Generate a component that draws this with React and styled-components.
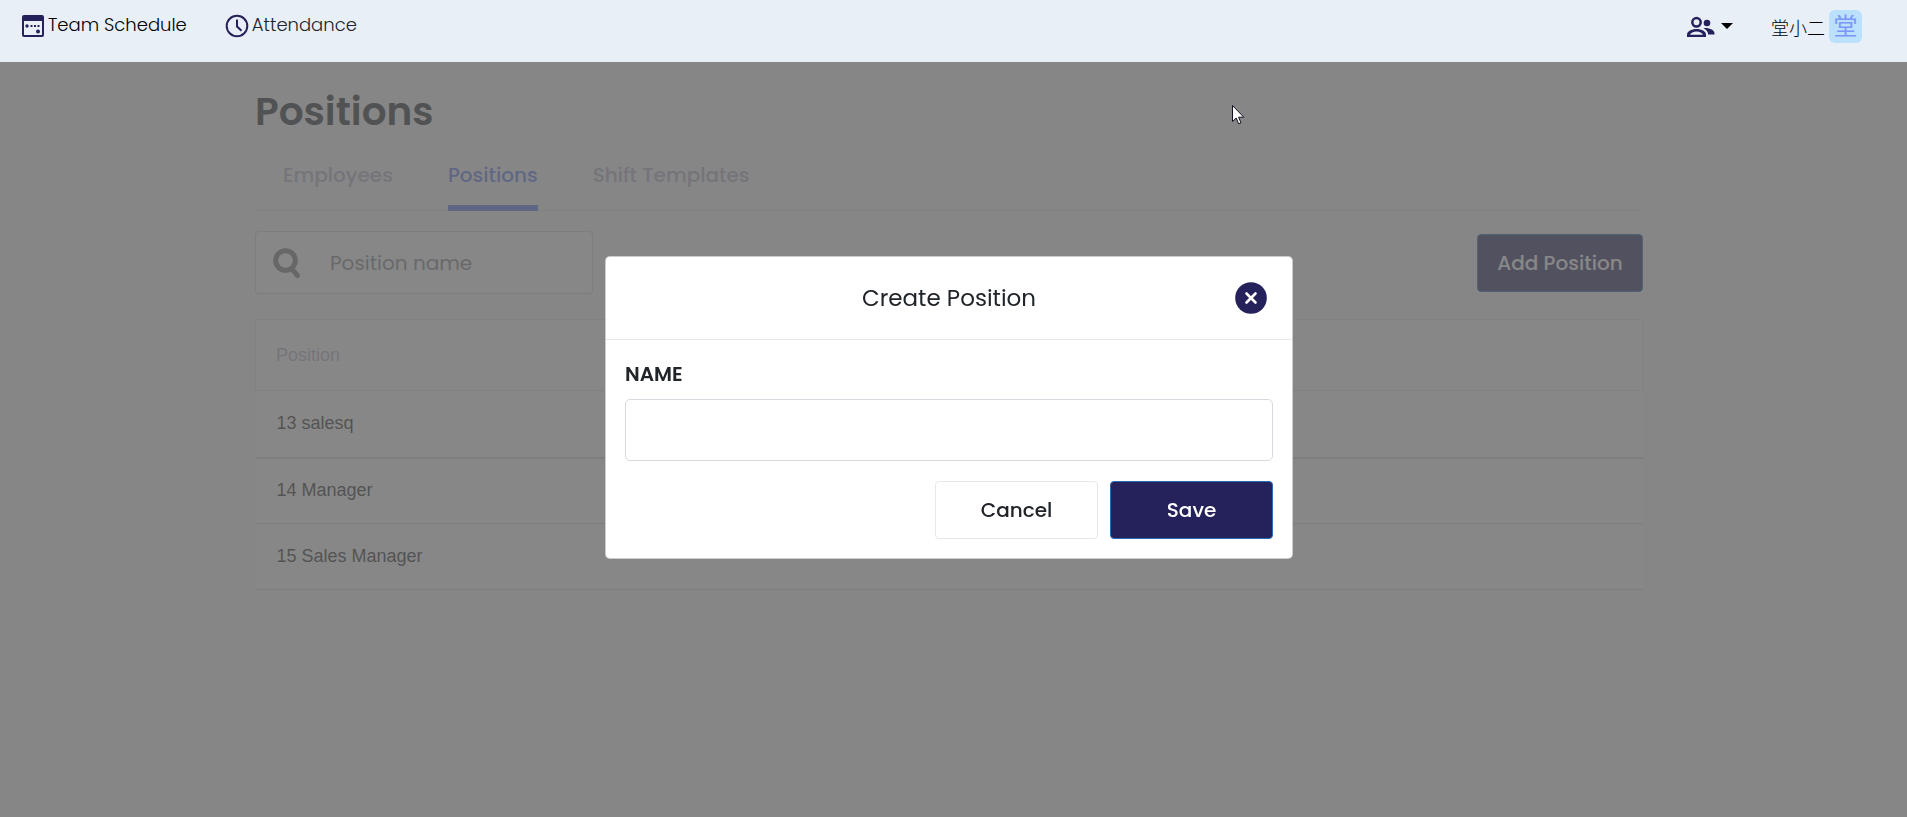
import React, { useState } from "react"
import styled, { createGlobalStyle } from "styled-components";


const GlobalStyle = createGlobalStyle`
  * {
    box-sizing: border-box;
  }
  body {
    margin: 0;
    background: #fafafa;
    color: #212529;
    font-family: Poppins, Inter, "Noto Sans CJK SC", sans-serif;
    font-size: 18px;
  }
  button, input {
    font-family: inherit;
  }
`;

const Header = styled.header`
  position: relative;
  z-index: 20;
  display: flex;
  justify-content: space-between;
  align-items: flex-start;
  height: 62px;
  padding: 10px 45px 0 21px;
  background: #e8eff7;
`;

const Menu = styled.nav`
  display: flex;
  gap: 38px;
`;

const MenuLink = styled.a`
  display: flex;
  align-items: center;
  gap: 3px;
  height: 32px;
  color: ${(props) => (props.$active ? "#000" : "#212529")};
  font-size: 18px;
  font-weight: 300;
  line-height: 30px;
  text-decoration: none;

  span {
    padding-bottom: 2px;
  }
`;

const UserZone = styled.div`
  display: flex;
  align-items: center;
  gap: 38px;
`;

const TeamButton = styled.button`
  display: flex;
  align-items: center;
  gap: 6px;
  padding: 0;
  border: 0;
  background: none;
`;

const UserLink = styled.a`
  display: flex;
  align-items: center;
  gap: 4px;
  color: #000;
  font-family: "Noto Sans CJK SC", sans-serif;
  font-size: 18px;
  font-weight: 300;
  line-height: 30px;
  text-decoration: none;
`;

const Avatar = styled.span`
  display: flex;
  align-items: center;
  justify-content: center;
  width: 33px;
  height: 33px;
  padding-bottom: 4px;
  border-radius: 6px;
  background: #bbe0fb;
  color: #7b96fa;
  font-size: 24px;
  font-weight: 400;
`;

const Page = styled.main`
  max-width: 1437px;
  margin: 0 auto;
  padding: 25px 29px 40px 20px;
`;

const Title = styled.h1`
  margin: 0;
  font-size: 39px;
  font-weight: 600;
  line-height: 50px;
`;

const Tabs = styled.nav`
  display: flex;
  gap: 55px;
  margin-top: 15px;
  padding-left: 28px;
  border-bottom: 1px solid #e4e2ea;
`;

const Tab = styled.a`
  height: 59px;
  margin-bottom: -1px;
  padding-top: 8px;
  border-bottom: 6px solid ${(props) => (props.$active ? "#5f7cf0" : "transparent")};
  color: ${(props) => (props.$active ? "#5f7cf0" : "#b4b0c8")};
  font-size: 20px;
  font-weight: 500;
  line-height: 30px;
  text-decoration: none;
`;

const Toolbar = styled.div`
  display: flex;
  justify-content: space-between;
  align-items: center;
  margin: 20px 0 25px;
`;

const SearchBox = styled.label`
  display: flex;
  align-items: center;
  gap: 29px;
  width: 338px;
  height: 63px;
  padding: 0 17px;
  border: 1px solid #d4d4da;
  border-radius: 4px;
  background: #fff;

  input {
    flex: 1;
    min-width: 0;
    padding: 0;
    border: 0;
    outline: 0;
    background: none;
    font-size: 20px;
  }
  input::placeholder {
    color: #7c848c;
    opacity: 1;
  }
`;

const Button = styled.button`
  min-width: ${(props) => (props.$wide ? "166px" : "163px")};
  height: 58px;
  padding: 0;
  border: 1px solid ${(props) => (props.$primary ? "#2a6db5" : "#e6e8ee")};
  border-radius: 4px;
  background: ${(props) => (props.$primary ? "#24215b" : "#fff")};
  color: ${(props) => (props.$primary ? "#fff" : "#212529")};
  font-size: 20px;
  font-weight: 500;
`;

const Table = styled.table`
  width: 100%;
  border-collapse: collapse;
  background: #fff;
  font-family: "Liberation Sans", Arial, sans-serif;
  font-size: 18px;
  text-align: left;

  th {
    height: 71px;
    padding: 0 20px;
    border: 1px solid #e4e4e8;
    color: #b4b0c8;
    font-weight: 400;
  }
  td {
    height: 66px;
    padding: 0 21px;
    border-bottom: 1px solid #d4d4d8;
    color: #2c2c2c;
  }
  tbody tr:first-child td {
    height: 67px;
    border-bottom: 2px solid #d4d4d8;
  }
`;

const Overlay = styled.div`
  position: fixed;
  inset: 0;
  z-index: 10;
  display: flex;
  align-items: center;
  justify-content: center;
  padding: 0 9px 2px 0;
  background: rgba(97, 97, 97, 0.757);
`;

const Modal = styled.form`
  width: 100%;
  max-width: 688px;
  border: 1px solid rgba(0, 0, 0, 0.2);
  border-radius: 5px;
  background: #fff;
`;

const ModalHeader = styled.div`
  display: grid;
  grid-template-columns: 32px 1fr 32px;
  align-items: center;
  height: 83px;
  padding: 0 25px;
  border-bottom: 1px solid #e6e8ee;

  h2 {
    grid-column: 2;
    margin: 0;
    font-size: 23px;
    font-weight: 400;
    text-align: center;
  }
`;

const CloseButton = styled.button`
  display: flex;
  width: 32px;
  height: 32px;
  padding: 0;
  border: 0;
  background: none;
`;

const ModalBody = styled.div`
  padding: 20px 19px 19px;
`;

const Label = styled.label`
  display: block;
  margin-bottom: 10px;
  font-size: 20px;
  font-weight: 600;
  line-height: 29px;
`;

const TextInput = styled.input`
  display: block;
  width: 100%;
  height: 62px;
  padding: 0 16px;
  border: 1px solid #d5dae0;
  border-radius: 5px;
  font-size: 20px;
`;

const Actions = styled.div`
  display: flex;
  justify-content: flex-end;
  gap: 12px;
  margin-top: 20px;
`;

const Pointer = styled.svg`
  position: fixed;
  top: 105px;
  left: 1232px;
  z-index: 30;
  pointer-events: none;
`;


const CalendarIcon = () => (
  <svg width="24" height="24" viewBox="0 0 24 24" fill="#24215b">
    <path fillRule="evenodd" d="M3 1h18a2 2 0 0 1 2 2v18a2 2 0 0 1-2 2H3a2 2 0 0 1-2-2V3a2 2 0 0 1 2-2zM3 7v14h18V7z" />
    <circle cx="6" cy="12" r="1.7" />
    <rect x="9.5" y="11" width="2" height="2" />
    <rect x="13" y="11" width="2" height="2" />
    <rect x="16.5" y="11" width="2" height="2" />
    <circle cx="17" cy="17.5" r="2" />
  </svg>
)

const ClockIcon = () => (
  <svg width="24" height="24" viewBox="0 0 24 24" fill="none" stroke="#24215b" strokeWidth="2">
    <circle cx="12" cy="12" r="10.3" />
    <path d="M12 5.5v7l4.5 4.3" />
  </svg>
)

const PeopleIcon = () => (
  <svg width="29" height="22" viewBox="0 0 29 22" fill="#24215b">
    <circle cx="10.5" cy="6.3" r="4.2" fill="none" stroke="#24215b" strokeWidth="2.5" />
    <path fillRule="evenodd" d="M1 21v-2.2C1 15.2 5.500 13 10.500 13s9.500 2.200 9.500 5.800V21zM4 18.700h13c-.6-1.900-3.400-3.200-6.500-3.200S4.600 16.800 4 18.700z" />
    <circle cx="21" cy="7" r="3.300" />
    <path d="M17.500 12.200c5.500-.7 11 1.800 11 5.300v1h-6.300c0-2.600-1.700-4.700-4.700-6.300z" />
  </svg>
)

const SearchIcon = () => (
  <svg width="28" height="32" viewBox="0 0 28 32" fill="none" stroke="#7a7a7a">
    <circle cx="12.500" cy="13.500" r="9.800" strokeWidth="5" />
    <path d="M18.500 21.500l6 7.200" strokeWidth="5" strokeLinecap="round" />
  </svg>
)

const CloseIcon = () => (
  <svg width="32" height="32" viewBox="0 0 32 32">
    <circle cx="16" cy="16" r="15.800" fill="#24215b" />
    <path d="M11.500 11.500l9 9M20.500 11.500l-9 9" stroke="#fff" strokeWidth="2.600" strokeLinecap="round" />
  </svg>
)


const tabs = ["Employees", "Positions", "Shift Templates"]

const positions = [
  { id: 13, name: "salesq" },
  { id: 14, name: "Manager" },
  { id: 15, name: "Sales Manager" },
]


const CreatePosition = ({ onClose }) => {
  const [name, setName] = useState("")

  const onSubmit = (e) => {
    e.preventDefault()
    onClose()
  }

  return (
    <Overlay>
      <Modal role="dialog" aria-labelledby="create-title" onSubmit={onSubmit}>
        <ModalHeader>
          <h2 id="create-title">Create Position</h2>
          <CloseButton type="button" aria-label="Close" onClick={onClose}>
            <CloseIcon />
          </CloseButton>
        </ModalHeader>
        <ModalBody>
          <Label htmlFor="position-name">NAME</Label>
          <TextInput
            id="position-name"
            value={name}
            onChange={(e) => setName(e.target.value)}
          />
          <Actions>
            <Button type="button" onClick={onClose}>Cancel</Button>
            <Button type="submit" $primary>Save</Button>
          </Actions>
        </ModalBody>
      </Modal>
    </Overlay>
  )
}


const App = () => {
  const [open, setOpen] = useState(true)
  const [search, setSearch] = useState("")

  const rows = positions.filter((item) => item.name.toLowerCase().includes(search.toLowerCase()))

  return (
    <>
      <GlobalStyle />
      <Header>
        <Menu>
          <MenuLink href="#schedule" $active><CalendarIcon /><span>Team Schedule</span></MenuLink>
          <MenuLink href="#attendance"><ClockIcon /><span>Attendance</span></MenuLink>
        </Menu>
        <UserZone>
          <TeamButton type="button" aria-label="Team">
            <PeopleIcon />
            <svg width="12" height="10" viewBox="0 0 12 10"><path d="M0 1h12L6 7z" /></svg>
          </TeamButton>
          <UserLink href="#profile">堂小二<Avatar>堂</Avatar></UserLink>
        </UserZone>
      </Header>

      <Page>
        <Title>Positions</Title>
        <Tabs>
          {tabs.map((tab) => (
            <Tab key={tab} href={`#${tab}`} $active={tab === "Positions"}>{tab}</Tab>
          ))}
        </Tabs>
        <Toolbar>
          <SearchBox>
            <SearchIcon />
            <input
              type="text"
              aria-label="Position name"
              placeholder="Position name"
              value={search}
              onChange={(e) => setSearch(e.target.value)}
            />
          </SearchBox>
          <Button type="button" $primary $wide onClick={() => setOpen(true)}>Add Position</Button>
        </Toolbar>
        <Table>
          <thead>
            <tr><th>Position</th></tr>
          </thead>
          <tbody>
            {rows.map((item) => (
              <tr key={item.id}><td>{item.id} {item.name}</td></tr>
            ))}
          </tbody>
        </Table>
      </Page>

      {open && <CreatePosition onClose={() => setOpen(false)} />}

      <Pointer width="13" height="20" viewBox="0 0 13 20" aria-hidden="true">
        <path d="M.5.500v16l3.700-3.500 2.400 5.800 2.400-1-2.400-5.600h5.200z" fill="#fff" stroke="#111122" />
      </Pointer>
    </>
  )
}


export default App
